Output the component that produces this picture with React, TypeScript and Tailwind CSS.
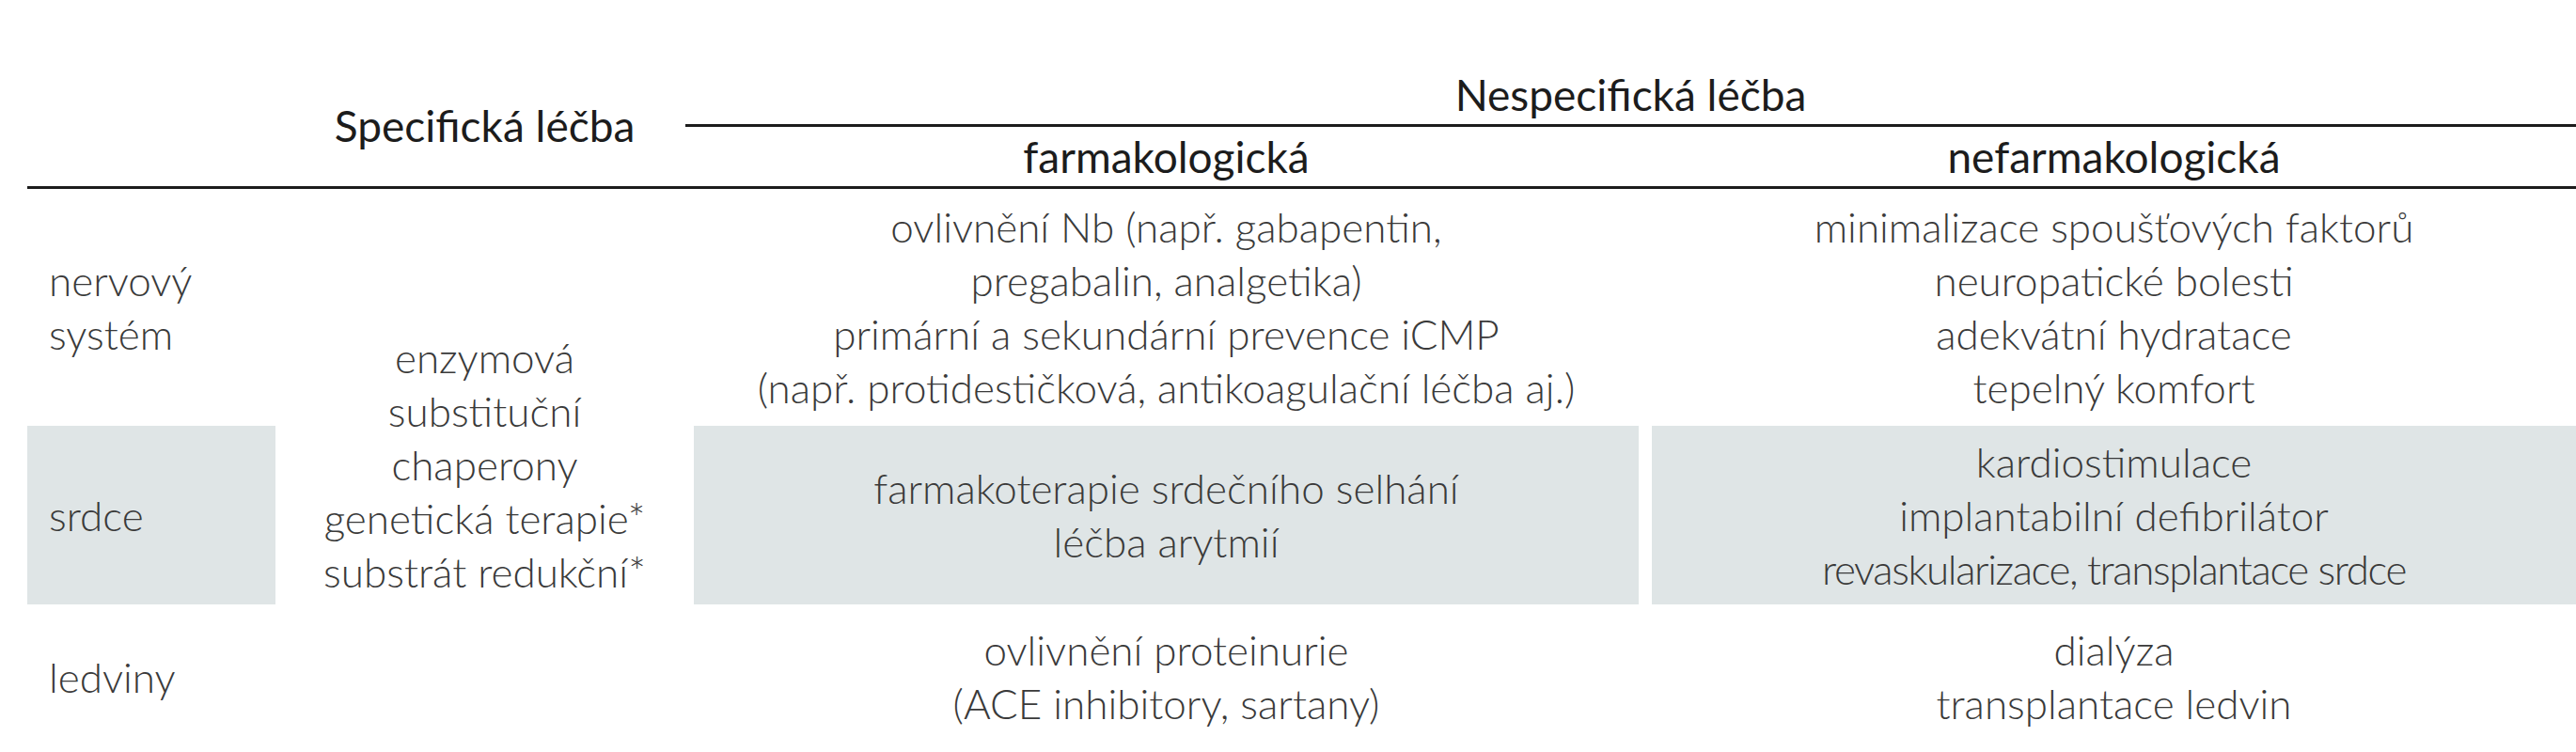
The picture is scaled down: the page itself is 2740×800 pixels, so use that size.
import React from 'react'

const headCls = "text-[46px] leading-[57px] text-[#1c1c1c] whitespace-nowrap"
const cellCls = "flex flex-col justify-center items-center text-center whitespace-nowrap"

function Lines({ items }: { items: string[] }) {
  return (
    <>
      {items.map((t) => (
        <span key={t}>{t}</span>
      ))}
    </>
  )
}

export default function App() {
  return (
    <div className="w-[2740px] h-[800px] bg-white pl-[29px] font-['Lato','Liberation_Sans',sans-serif]">
      {/* header */}
      <div className="grid grid-cols-[264px_417px_1005px_983px] gap-x-[14px] grid-rows-[135px_63px] border-b-[3px] border-[#1c1c1c]">
        <div className="row-span-2" />
        <div className={`row-span-2 flex items-end justify-center pb-[36px] ${headCls}`}>Specifická léčba</div>
        <div className={`col-span-2 -ml-[9px] flex items-end justify-center pb-[3px] border-b-[3px] border-[#1c1c1c] ${headCls}`}>
          Nespecifická léčba
        </div>
        <div className={`flex items-center justify-center ${headCls}`}>farmakologická</div>
        <div className={`flex items-center justify-center ${headCls}`}>nefarmakologická</div>
      </div>

      {/* body */}
      <div className="grid grid-cols-[264px_417px_1005px_983px] gap-x-[14px] grid-rows-[252px_190px_154px] text-[44px] leading-[57px] text-[#3a3a3a] font-light">
        <div className="flex flex-col justify-center pl-[23px]">
          <span>nervový</span>
          <span>systém</span>
        </div>
        <div className={`row-span-3 pb-[10px] ${cellCls}`}>
          <Lines items={['enzymová', 'substituční', 'chaperony', 'genetická terapie*', 'substrát redukční*']} />
        </div>
        <div className={cellCls}>
          <Lines
            items={[
              'ovlivnění Nb (např. gabapentin,',
              'pregabalin, analgetika)',
              'primární a sekundární prevence iCMP',
              '(např. protidestičková, antikoagulační léčba aj.)',
            ]}
          />
        </div>
        <div className={cellCls}>
          <Lines
            items={['minimalizace spoušťových faktorů', 'neuropatické bolesti', 'adekvátní hydratace', 'tepelný komfort']}
          />
        </div>

        <div className="flex flex-col justify-center pl-[23px] bg-[#dfe5e6]">
          <span>srdce</span>
        </div>
        <div className={`bg-[#dfe5e6] ${cellCls}`}>
          <Lines items={['farmakoterapie srdečního selhání', 'léčba arytmií']} />
        </div>
        <div className={`bg-[#dfe5e6] ${cellCls}`}>
          <span>kardiostimulace</span>
          <span>implantabilní defibrilátor</span>
          <span className="tracking-[-1.4px]">revaskularizace, transplantace srdce</span>
        </div>

        <div className="flex flex-col justify-center pl-[23px]">
          <span>ledviny</span>
        </div>
        <div className={cellCls}>
          <Lines items={['ovlivnění proteinurie', '(ACE inhibitory, sartany)']} />
        </div>
        <div className={cellCls}>
          <Lines items={['dialýza', 'transplantace ledvin']} />
        </div>
      </div>
    </div>
  )
}
